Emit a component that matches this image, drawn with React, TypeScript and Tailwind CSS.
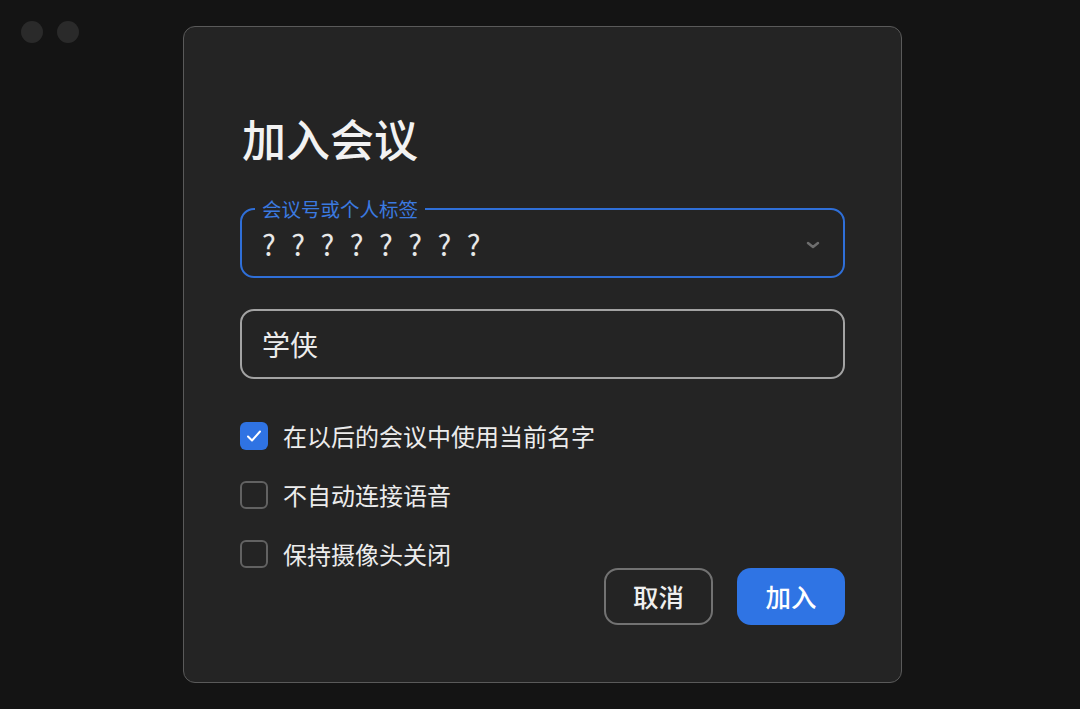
import React from "react";

const font = { fontFamily: '"Noto Sans CJK SC", "Noto Sans", sans-serif' };

function Check({ checked, label }: { checked?: boolean; label: string }) {
  return (
    <div className="flex items-center h-[28px]">
      {checked ? (
        <div className="w-[28px] h-[28px] rounded-[6px] bg-[#2f73e3] flex items-center justify-center">
          <svg width="16" height="14" viewBox="0 0 16 14" fill="none">
            <path d="M2 7.5 L6 11.5 L14 2.5" stroke="#fff" strokeWidth="2" strokeLinecap="round" strokeLinejoin="round" />
          </svg>
        </div>
      ) : (
        <div className="w-[28px] h-[28px] rounded-[6px] border-2 border-[#626262]" />
      )}
      <span className="ml-[15px] text-[24px] leading-[28px] text-[#ececec]">{label}</span>
    </div>
  );
}

export default function App() {
  return (
    <div style={font} className="relative w-[1080px] h-[709px] bg-[#141414] overflow-hidden pl-[183px] pt-[26px]">
      <div className="absolute left-[21px] top-[21px] flex gap-[14px]">
        <div className="w-[22px] h-[22px] rounded-full bg-[#2a2a2a]" />
        <div className="w-[22px] h-[22px] rounded-full bg-[#2a2a2a]" />
      </div>
      <div className="w-[719px] h-[657px] rounded-[12px] border border-[#5a5a5a] bg-[#242424] px-[56px] pt-[86px] flex flex-col">
        <div className="h-[50px] leading-[50px] text-[44px] font-medium text-[#f2f2f2] ml-[2px]">加入会议</div>
        <div className="mt-[45px] relative h-[70px] rounded-[14px] border-2 border-[#2f6fd8] flex items-center pl-[20px] pr-[22px]">
          <div className="absolute -top-[13px] left-[13px] px-[7px] bg-[#242424] text-[19.5px] leading-[24px] text-[#3b7ae0]">会议号或个人标签</div>
          <span className="text-[29px] leading-[36px] text-[#e8e8e8] tracking-[4.5px] flex-1">? ? ? ? ? ? ? ?</span>
          <svg width="16" height="10" viewBox="0 0 16 10" fill="none" className="mt-[4px]">
            <path d="M3 3 L8 7 L13 3" stroke="#6e6e6e" strokeWidth="2.5" strokeLinecap="round" strokeLinejoin="round" />
          </svg>
        </div>
        <div className="mt-[31px] h-[70px] rounded-[14px] border-2 border-[#a3a3a3] flex items-center pl-[20px]">
          <span className="text-[28px] text-[#ececec]">学侠</span>
        </div>
        <div className="mt-[43px] flex flex-col gap-[31px]">
          <Check checked label="在以后的会议中使用当前名字" />
          <Check label="不自动连接语音" />
          <Check label="保持摄像头关闭" />
        </div>
        <div className="flex justify-end gap-[24px]">
          <button className="w-[109px] h-[57px] rounded-[14px] border-2 border-[#727272] text-[25.5px] font-medium text-[#efefef]">取消</button>
          <button className="w-[108px] h-[57px] rounded-[14px] bg-[#2f74e4] text-[25.5px] font-medium text-white">加入</button>
        </div>
      </div>
    </div>
  );
}
